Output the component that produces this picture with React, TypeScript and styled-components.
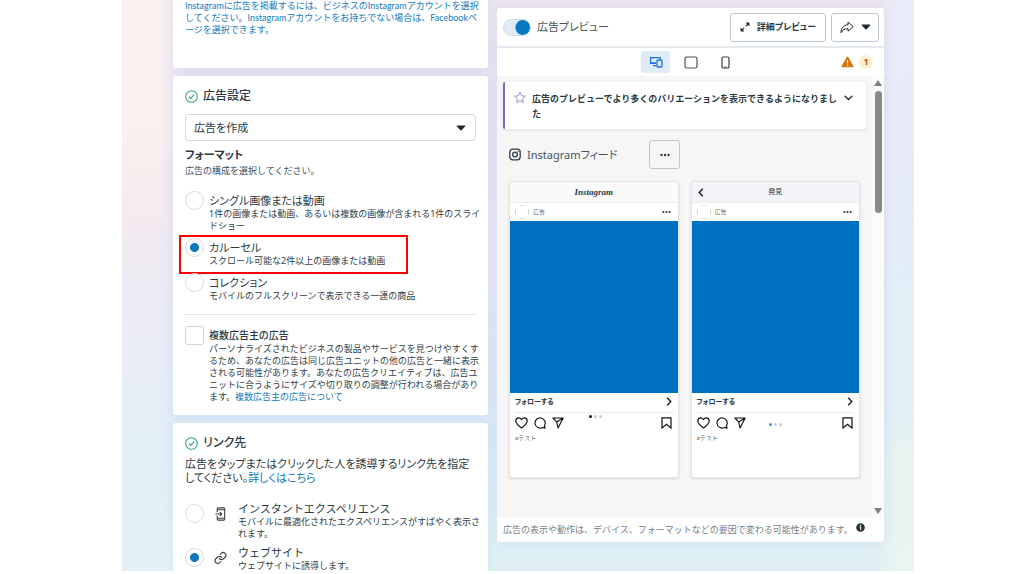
import React from "react";
import styled, { createGlobalStyle } from "styled-components";

const Global = createGlobalStyle`
  *, *::before, *::after { box-sizing: border-box; }
  body {
    margin: 0;
    background: #fff;
    color: #2b3a42;
    font-family: "Noto Sans", "Noto Sans CJK JP", sans-serif;
    font-size: 9px;
    line-height: 12px;
    overflow: hidden;
  }
  button, select, input { font: inherit; font-feature-settings: inherit; color: inherit; margin: 0; }
  h2, h3, p, header, fieldset { margin: 0; padding: 0; border: 0; min-width: 0; }
`;

const Backdrop = styled.main`
  position: relative;
  isolation: isolate;
  margin: 0 110px 3px 122px;
  height: calc(100vh - 3px);
  overflow: hidden;
  padding: 0 30px 0 51px;
  display: grid;
  grid-template-columns: minmax(0, 315fr) minmax(0, 387fr);
  column-gap: 9px;
  align-items: start;
  background: linear-gradient(#e9e4f0 0%, #e6e2f3 12%, #e3e5f5 50%, #d9e8f6 75%, #dfeff5 100%);
  &::before, &::after {
    content: "";
    position: absolute;
    z-index: -1;
    top: 0;
    bottom: 0;
  }
  &::before {
    left: 0;
    width: 60px;
    background: linear-gradient(#faf0f0 0%, #fbf0ee 23%, #f8ebee 33%, #efeaf2 45%, #ebedf8 61%, #e6eef7 70%, #e3f0f8 79%, #e4f0f8 100%);
    mask-image: linear-gradient(to right, #000 36px, transparent);
  }
  &::after {
    right: 0;
    width: 40px;
    background: linear-gradient(#e9ecf8 0%, #e6ebf8 35%, #e2eff7 50%, #e3f0f6 70%, #e6f3f0 80%, #e8f5f0 100%);
    mask-image: linear-gradient(to left, #000 16px, transparent);
  }
`;

const FormColumn = styled.div`
  display: flex;
  flex-direction: column;
  gap: 8px;
`;

const Card = styled.section`
  background: #fff;
  border-radius: 3px;
  padding: 13px 12px 12px;
  box-shadow: 0 0 8px rgba(70, 90, 130, 0.06);
  white-space: nowrap;
`;

const AccountCard = styled(Card)`
  padding-top: 0;
  padding-bottom: 32px;
  border-radius: 0 0 3px 3px;
  font-family: Lato, "Noto Sans CJK JP", sans-serif;
`;

const Heading = styled.h2`
  display: flex;
  align-items: center;
  gap: 5px;
  height: 14px;
  font-size: 12px;
  line-height: 14px;
  font-weight: 500;
  font-feature-settings: "palt";
`;

const Link = styled.a`
  color: #1479bd;
  text-decoration: none;
`;

const SelectBox = styled.div`
  position: relative;
  margin-top: 11px;
  select {
    display: block;
    width: 100%;
    height: 27px;
    padding: 0 8px;
    appearance: none;
    background: #fff;
    border: 1px solid #d3dae0;
    border-radius: 3px;
    font-size: 11px;
    font-feature-settings: "palt";
  }
  svg { position: absolute; right: 10px; top: 11px; pointer-events: none; }
`;

const GroupTitle = styled.h3`
  margin-top: 7px;
  font-size: 11px;
  line-height: 14px;
  font-weight: 700;
  font-feature-settings: "palt";
`;

const Note = styled.p`
  margin-top: 3px;
  color: #41505a;
`;

const Lead = styled.p`
  margin-top: 7px;
  margin-bottom: 1px;
  font-size: 11px;
  line-height: 14px;
  font-feature-settings: "palt";
`;

const Options = styled.fieldset<{ $gap: number }>`
  display: flex;
  flex-direction: column;
  gap: ${(p) => p.$gap}px;
  margin-top: 17px;
`;

const OptionRow = styled.label<{ $low?: boolean }>`
  position: relative;
  display: flex;
  align-items: flex-start;
  min-height: 26px;
  > input { margin-top: ${(p) => (p.$low ? 2 : -3)}px; margin-right: 5px; }
  > svg { flex: none; margin: 5px 11px 0 5px; }
`;

const OptionTitle = styled.span<{ $bold?: boolean; $wide?: boolean }>`
  display: block;
  font-size: ${(p) => (p.$bold ? 10 : 11)}px;
  font-weight: ${(p) => (p.$bold ? 500 : 400)};
  font-feature-settings: ${(p) => (p.$wide ? "normal" : '"palt"')};
  line-height: 13px;
`;

const OptionText = styled.span`
  display: block;
  margin-top: 1px;
  color: #2f3d46;
`;

const Radio = styled.input.attrs({ type: "radio" })`
  flex: none;
  appearance: none;
  width: 19px;
  height: 19px;
  border: 1px solid #d5dbe2;
  border-radius: 50%;
  background: #fff;
  &:checked { background: radial-gradient(circle, #0a78be 4px, #fff 5px); }
`;

const Check = styled.input.attrs({ type: "checkbox" })`
  flex: none;
  appearance: none;
  width: 19px;
  height: 19px;
  border: 1px solid #ccd3da;
  border-radius: 3px;
  background: #fff;
`;

const Highlight = styled.span`
  position: absolute;
  left: -6px;
  top: -6px;
  width: 229px;
  height: 39px;
  border: 2px solid #f00;
  pointer-events: none;
`;

const Rule = styled.hr`
  margin: 12px 0 14px;
  border: 0;
  border-top: 1px solid #e3e7ea;
`;

const PreviewPanel = styled(Card)`
  margin-top: 8px;
  padding: 0;
  overflow: hidden;
`;

const PreviewHeader = styled.header`
  display: flex;
  align-items: center;
  height: 40px;
  padding: 0 5px 0 6px;
  border-bottom: 2px solid #e6e9ec;
`;

const ToggleLabel = styled.label`
  display: flex;
  align-items: center;
  gap: 6px;
  margin-right: auto;
  font-size: 11px;
  font-feature-settings: "palt";
  color: #45545e;
`;

const Toggle = styled.input.attrs({ type: "checkbox", role: "switch" })`
  appearance: none;
  width: 28px;
  height: 17px;
  border: 1px solid #c9dcea;
  border-radius: 9px;
  background: radial-gradient(circle at 19px 50%, #0a78be 7px, #dfecf6 8px);
`;

const Button = styled.button<{ $w: number }>`
  display: flex;
  align-items: center;
  justify-content: center;
  gap: 7px;
  width: ${(p) => p.$w}px;
  height: 29px;
  padding: 0;
  margin-left: 5px;
  background: transparent;
  border: 1px solid #bcc6d0;
  border-radius: 3px;
  font-weight: 700;
  font-feature-settings: "palt";
`;

const DeviceBar = styled.div`
  position: relative;
  display: flex;
  align-items: center;
  justify-content: center;
  gap: 6px;
  height: 28px;
`;

const DeviceButton = styled.button<{ $active?: boolean }>`
  display: grid;
  place-items: center;
  width: 29px;
  height: 22px;
  padding: 0;
  border: 0;
  border-radius: 2px;
  background: ${(p) => (p.$active ? "#dfecf7" : "transparent")};
`;

const Alerts = styled.div`
  position: absolute;
  right: 11px;
  top: 7px;
  display: flex;
  align-items: center;
  gap: 5px;
`;

const Count = styled.span`
  width: 14px;
  height: 14px;
  border-radius: 50%;
  background: #fff1cf;
  color: #b45309;
  line-height: 14px;
  font-weight: 700;
  text-align: center;
`;

const Scroller = styled.div`
  display: flex;
  background: #f6f6f6;
`;

const Canvas = styled.div`
  flex: 1;
  min-width: 0;
  padding: 6px 6px 39px;
`;

const ScrollTrack = styled.div`
  display: flex;
  flex-direction: column;
  align-items: center;
  width: 12px;
  padding: 4px 0 3px;
  background: #fbfbfb;
`;

const Thumb = styled.span`
  width: 7px;
  height: 122px;
  margin: 5px 0 auto;
  border-radius: 4px;
  background: #898989;
`;

const Notice = styled.div`
  display: flex;
  align-items: flex-start;
  height: 47px;
  padding: 9px 12px 0 9px;
  border-left: 2px solid #8266c4;
  border-radius: 2px 3px 3px 2px;
  background: #fff;
  box-shadow: 0 1px 3px rgba(0, 0, 0, 0.1);
  font-weight: 700;
  line-height: 15px;
  p { flex: 1; margin-left: 6px; }
`;

const IconButton = styled.button`
  display: grid;
  place-items: center;
  padding: 0;
  border: 0;
  background: none;
  width: 12px;
  height: 14px;
`;

const PlacementRow = styled.div`
  display: flex;
  align-items: center;
  height: 29px;
  margin: 11px 6px 12px;
  font-size: 11px;
  font-feature-settings: "palt";
  color: #45545e;
  span { margin: 0 27px 0 6px; }
`;

const Previews = styled.div`
  display: grid;
  grid-template-columns: 1fr 1fr;
  gap: 12px;
  margin: 0 6px;
`;

const Phone = styled.article`
  height: 297px;
  background: #fff;
  border: 1px solid #e4e4e4;
  border-radius: 2px;
  box-shadow: 0 1px 3px rgba(0, 0, 0, 0.12);
`;

const PhoneBar = styled.div<{ $tint: string }>`
  display: grid;
  grid-template-columns: 18px 1fr 18px;
  align-items: center;
  justify-items: center;
  height: 21px;
  background: ${(p) => p.$tint};
  border-bottom: 1px solid #ececec;
  font-size: 7px;
  > :first-child { display: flex; }
`;

const Wordmark = styled.span`
  font-family: "Liberation Serif", serif;
  font-style: italic;
  font-weight: 700;
  font-size: 9px;
`;

const Author = styled.div`
  display: flex;
  align-items: center;
  height: 18px;
  padding: 0 7px 0 5px;
  font-size: 6px;
  color: #777;
  span { margin: 0 auto 0 4px; }
`;

const Slide = styled.div`
  height: 172px;
  background: #0070c0;
`;

const Follow = styled.div`
  display: flex;
  align-items: center;
  justify-content: space-between;
  height: 20px;
  margin: 0 5px;
  padding: 0 1px 2px 0;
  border-bottom: 1px solid #ececec;
  font-size: 7px;
  font-weight: 700;
  font-feature-settings: "palt";
`;

const Actions = styled.div`
  position: relative;
  display: flex;
  align-items: center;
  gap: 6px;
  height: 20px;
  padding: 0 6px 0 5px;
  > :last-child { margin-left: auto; }
`;

const Dots = styled.span<{ $raised?: boolean; $color: string }>`
  position: absolute;
  left: ${(p) => (p.$raised ? "47%" : "46%")};
  top: ${(p) => (p.$raised ? 2 : 10)}px;
  display: flex;
  gap: 2px;
  i { width: 3px; height: 3px; border-radius: 50%; background: #c9ccd0; }
  i:first-child { background: ${(p) => p.$color}; }
`;

const Caption = styled.p`
  padding: 0 5px;
  font-size: 6px;
  line-height: 10px;
  color: #666;
`;

const Footer = styled.div`
  display: flex;
  align-items: center;
  gap: 3px;
  height: 25px;
  padding-left: 6px;
  color: #75818a;
  svg { margin-top: -4px; }
`;

const CheckCircle = () => (
  <svg width="13" height="13" viewBox="0 0 13 13" fill="none" stroke="#3fa183" strokeLinecap="round" strokeLinejoin="round">
    <circle cx="6.5" cy="6.5" r="5.8" strokeWidth="1.1" />
    <path d="M4.2 6.8l1.6 1.6 3.1-3.5" strokeWidth="1.2" />
  </svg>
);

const Caret = () => (
  <svg width="10" height="6" viewBox="0 0 10 6" fill="#1c2b33">
    <path d="M1.4.5h7.2c.6 0 .9.6.5 1L5.6 5.2c-.3.4-.9.4-1.2 0L.9 1.5C.5 1.1.8.5 1.4.5z" />
  </svg>
);

const Ellipsis = ({ w = 10 }: { w?: number }) => (
  <svg width={w} height="4" viewBox="0 0 10 4" fill="#2b3a42">
    <circle cx="1.5" cy="2" r="1.2" />
    <circle cx="5" cy="2" r="1.2" />
    <circle cx="8.5" cy="2" r="1.2" />
  </svg>
);

const InstantIcon = () => (
  <svg width="13" height="14" viewBox="0 0 13 15" fill="none" stroke="#37434b" strokeWidth="1.2" strokeLinejoin="round">
    <path d="M3 5.5V2.2C3 1.5 3.5 1 4.2 1h5.6c.7 0 1.2.5 1.2 1.2v10.6c0 .7-.5 1.2-1.2 1.2H4.2C3.5 14 3 13.5 3 12.8V9.5" />
    <path d="M3 3h8M3 12h8M1 7.5h6.5M5.7 5.4l2.2 2.1-2.2 2.1" />
  </svg>
);

const LinkIcon = () => (
  <svg width="13" height="14" viewBox="0 0 24 24" fill="none" stroke="#37434b" strokeWidth="2.2" strokeLinecap="round">
    <path d="M10 13a5 5 0 0 0 7.54.54l3-3a5 5 0 0 0-7.07-7.07l-1.72 1.71" />
    <path d="M14 11a5 5 0 0 0-7.54-.54l-3 3a5 5 0 0 0 7.07 7.07l1.71-1.71" />
  </svg>
);

const ExpandIcon = () => (
  <svg width="10" height="10" viewBox="0 0 10 10" fill="#1c2b33" stroke="#1c2b33" strokeWidth="1.1">
    <path d="M6 .8h3.2V4zM4 9.2H.8V6z" strokeWidth=".4" />
    <path d="M8.5 1.5L5.8 4.2M1.5 8.5l2.7-2.7" />
  </svg>
);

const ShareIcon = () => (
  <svg width="14" height="13" viewBox="0 0 14 13" fill="none" stroke="#1c2b33" strokeLinejoin="round">
    <path d="M8 1l5.2 4.7L8 10.2V7.7C4.7 7.5 2.5 9 1.1 11.8.8 7.5 3.5 4 8 3.7z" />
  </svg>
);

const Screens = () => (
  <svg width="14" height="12" viewBox="0 0 14 12" fill="none" stroke="#1b74e4" strokeWidth="1.3">
    <path d="M7 7.3H1.6V1.6h9.8V3M1 6.8h6" />
    <path d="M4 9.6h3.5" />
    <rect x="8" y="4" width="5" height="7" rx="1" fill="#dfecf7" />
  </svg>
);

const Tablet = () => (
  <svg width="14" height="13" viewBox="0 0 14 13" fill="none" stroke="#4b5359" strokeWidth="1.2">
    <rect x="1" y="1" width="12" height="11" rx="1.8" />
  </svg>
);

const Mobile = () => (
  <svg width="9" height="13" viewBox="0 0 9 13" fill="none" stroke="#343c42" strokeWidth="1.2">
    <rect x="1" y="1" width="7" height="11" rx="1.3" />
    <path d="M3 11h3" strokeWidth=".6" />
  </svg>
);

const Warning = () => (
  <svg width="13" height="12" viewBox="0 0 13 12">
    <path d="M5.7.9c.4-.7 1.2-.7 1.6 0l5.1 9c.4.7 0 1.3-.7 1.3H1.3c-.7 0-1.1-.6-.7-1.3z" fill="#d27812" />
    <path d="M6.5 4v3.3M6.5 8.5v1.2" stroke="#fff" strokeWidth="1.2" />
  </svg>
);

const Star = () => (
  <svg width="12" height="13" viewBox="0 0 24 24" fill="none" stroke="#9d85d8" strokeWidth="1.9" strokeLinejoin="round">
    <path d="M12 1.5l3.2 7 7.6.8-5.7 5.1 1.6 7.6-6.7-3.9L5.3 22l1.6-7.6L1.2 9.3l7.6-.8z" />
  </svg>
);

const ChevronDown = () => (
  <svg width="9" height="6" viewBox="0 0 9 6" fill="none" stroke="#26333b" strokeWidth="1.4" strokeLinecap="round">
    <path d="M1 1.2l3.5 3.3L8 1.2" />
  </svg>
);

const Chevron = ({ left }: { left?: boolean }) => (
  <svg width="6" height="9" viewBox="0 0 6 9" fill="none" stroke="#1c1c1c" strokeWidth="1.4">
    <path d={left ? "M4.8.8L1.2 4.5l3.6 3.7" : "M1.2.8l3.6 3.7-3.6 3.7"} />
  </svg>
);

const Camera = () => (
  <svg width="12" height="13" viewBox="0 0 12 13" fill="none" stroke="#2f3c45" strokeWidth="1.3">
    <rect x=".8" y="1.2" width="10.4" height="10.6" rx="3" />
    <circle cx="6" cy="6.5" r="2.4" />
    <circle cx="9" cy="3.5" r=".3" strokeWidth=".7" />
  </svg>
);

const Avatar = () => (
  <svg width="14" height="14" viewBox="0 0 14 14" fill="none" stroke="#d2d2d2">
    <path d="M.5 4.5v5M13.5 4.5v5" />
    <path d="M4.5.8c1.5-.5 3.5-.5 5 0M4.5 13.2c1.5.5 3.5.5 5 0" stroke="#e4dfdf" />
  </svg>
);

const Heart = () => (
  <svg width="13" height="12" viewBox="0 0 13 12" fill="none" stroke="#111" strokeWidth="1.15" strokeLinejoin="round">
    <path d="M6.5 11C4 9 .8 7 .8 4 .8 2.2 2.1.9 3.7.9c1.2 0 2.2.7 2.8 1.7C7.1 1.6 8.1.9 9.3.9c1.6 0 2.9 1.3 2.9 3.1 0 3-3.2 5-5.7 7z" />
  </svg>
);

const Comment = () => (
  <svg width="12" height="12" viewBox="0 0 12 12" fill="none" stroke="#111" strokeWidth="1.15" strokeLinejoin="round">
    <path d="M10.4 8.7A5.1 5.1 0 1 0 8.6 10.4l2.5.7z" />
  </svg>
);

const Send = () => (
  <svg width="12" height="12" viewBox="0 0 12 12" fill="none" stroke="#111" strokeWidth="1.15" strokeLinejoin="round">
    <path d="M.9 1h10.3L6 11 4.7 4.9zM4.7 4.9L11.2 1" />
  </svg>
);

const Bookmark = () => (
  <svg width="11" height="12" viewBox="0 0 11 12" fill="none" stroke="#111" strokeWidth="1.2">
    <path d="M1 .8h9v10.2L5.5 7.2 1 11z" />
  </svg>
);

const Info = () => (
  <svg width="9" height="9" viewBox="0 0 9 9">
    <circle cx="4.5" cy="4.5" r="4.3" fill="#26333b" />
    <path d="M4.5 1.8V3M3.7 4h1v2.8" stroke="#fff" strokeWidth="1.1" fill="none" />
  </svg>
);

const Arrow = ({ up }: { up?: boolean }) => (
  <svg width="8" height="6" viewBox="0 0 8 6" fill="#7f7f7f">
    <path d={up ? "M4 0l4 6H0z" : "M0 0h8L4 6z"} />
  </svg>
);

type MockProps = { tint: string; color: string; raised?: boolean; title: React.ReactNode; back?: boolean };

const Mock = ({ tint, color, raised, title, back }: MockProps) => (
  <Phone>
    <PhoneBar $tint={tint}>
      <span>{back && <Chevron left />}</span>
      {title}
    </PhoneBar>
    <Author>
      <Avatar />
      <span>広告</span>
      <Ellipsis w={9} />
    </Author>
    <Slide />
    <Follow>
      フォローする
      <Chevron />
    </Follow>
    <Actions>
      <Heart />
      <Comment />
      <Send />
      <Dots $color={color} $raised={raised}><i /><i /><i /></Dots>
      <Bookmark />
    </Actions>
    <Caption>aテスト</Caption>
  </Phone>
);

export default function App() {
  return (
    <>
      <Global />
      <Backdrop>
        <FormColumn>
          <AccountCard>
            <Link as="p">
              Instagramに広告を掲載するには、ビジネスのInstagramアカウントを選択<br />
              してください。Instagramアカウントをお持ちでない場合は、Facebookペ<br />
              ージを選択できます。
            </Link>
          </AccountCard>

          <Card>
            <Heading><CheckCircle />広告設定</Heading>
            <SelectBox>
              <select aria-label="広告設定" defaultValue="create">
                <option value="create">広告を作成</option>
              </select>
              <Caret />
            </SelectBox>
            <GroupTitle>フォーマット</GroupTitle>
            <Note>広告の構成を選択してください。</Note>
            <Options $gap={9}>
              <OptionRow>
                <Radio name="format" />
                <span>
                  <OptionTitle>シングル画像または動画</OptionTitle>
                  <OptionText>
                    1件の画像または動画、あるいは複数の画像が含まれる1件のスライ<br />ドショー
                  </OptionText>
                </span>
              </OptionRow>
              <OptionRow>
                <Radio name="format" defaultChecked />
                <span>
                  <OptionTitle>カルーセル</OptionTitle>
                  <OptionText>スクロール可能な2件以上の画像または動画</OptionText>
                </span>
                <Highlight />
              </OptionRow>
              <OptionRow>
                <Radio name="format" />
                <span>
                  <OptionTitle>コレクション</OptionTitle>
                  <OptionText>モバイルのフルスクリーンで表示できる一連の商品</OptionText>
                </span>
              </OptionRow>
            </Options>
            <Rule />
            <OptionRow as="div">
              <Check id="multi" />
              <div>
                <OptionTitle as="label" htmlFor="multi" $bold>複数広告主の広告</OptionTitle>
                <OptionText>
                  パーソナライズされたビジネスの製品やサービスを見つけやすくす<br />
                  るため、あなたの広告は同じ広告ユニットの他の広告と一緒に表示<br />
                  される可能性があります。あなたの広告クリエイティブは、広告ユ<br />
                  ニットに合うようにサイズや切り取りの調整が行われる場合があり<br />
                  ます。<Link href="#about">複数広告主の広告について</Link>
                </OptionText>
              </div>
            </OptionRow>
          </Card>

          <Card>
            <Heading><CheckCircle />リンク先</Heading>
            <Lead>
              広告をタップまたはクリックした人を誘導するリンク先を指定<br />
              してください。<Link href="#more">詳しくはこちら</Link>
            </Lead>
            <Options $gap={6}>
              <OptionRow $low>
                <Radio name="dest" />
                <InstantIcon />
                <span>
                  <OptionTitle $wide>インスタントエクスペリエンス</OptionTitle>
                  <OptionText>
                    モバイルに最適化されたエクスペリエンスがすばやく表示さ<br />れます。
                  </OptionText>
                </span>
              </OptionRow>
              <OptionRow $low>
                <Radio name="dest" defaultChecked />
                <LinkIcon />
                <span>
                  <OptionTitle $wide>ウェブサイト</OptionTitle>
                  <OptionText>ウェブサイトに誘導します。</OptionText>
                </span>
              </OptionRow>
            </Options>
          </Card>
        </FormColumn>

        <PreviewPanel>
          <PreviewHeader>
            <ToggleLabel><Toggle defaultChecked />広告プレビュー</ToggleLabel>
            <Button $w={96}><ExpandIcon />詳細プレビュー</Button>
            <Button $w={48} aria-label="共有"><ShareIcon /><Caret /></Button>
          </PreviewHeader>
          <DeviceBar>
            <DeviceButton $active aria-label="すべて"><Screens /></DeviceButton>
            <DeviceButton aria-label="タブレット"><Tablet /></DeviceButton>
            <DeviceButton aria-label="モバイル"><Mobile /></DeviceButton>
            <Alerts><Warning /><Count>1</Count></Alerts>
          </DeviceBar>
          <Scroller>
            <Canvas>
              <Notice>
                <Star />
                <p>広告のプレビューでより多くのバリエーションを表示できるようになりまし<br />た</p>
                <IconButton aria-label="開く"><ChevronDown /></IconButton>
              </Notice>
              <PlacementRow>
                <Camera />
                <span>Instagramフィード</span>
                <Button $w={31} aria-label="その他"><Ellipsis /></Button>
              </PlacementRow>
              <Previews>
                <Mock tint="#fafafa" color="#111" raised title={<Wordmark>Instagram</Wordmark>} />
                <Mock tint="#f3f4f7" color="#4a90f0" back title={<span>発見</span>} />
              </Previews>
            </Canvas>
            <ScrollTrack><Arrow up /><Thumb /><Arrow /></ScrollTrack>
          </Scroller>
          <Footer>
            広告の表示や動作は、デバイス、フォーマットなどの要因で変わる可能性があります。
            <Info />
          </Footer>
        </PreviewPanel>
      </Backdrop>
    </>
  );
}
